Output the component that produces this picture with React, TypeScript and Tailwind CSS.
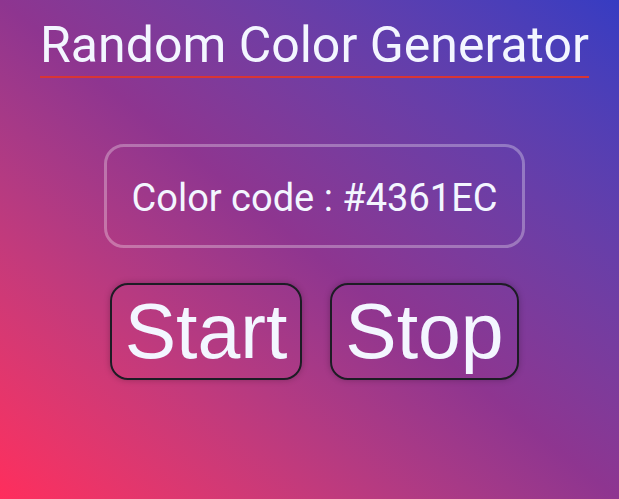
export default function App() {
  return (
    <div className="min-h-[499px] w-full bg-gradient-to-tr from-[#ff2d5c] via-[#8e3590] to-[#363cc2] flex flex-col items-center pl-[10px] text-[#f3f6ff]">
      <h1 className="mt-[15px] pb-[1px] border-b-2 border-[#d93535] font-['Roboto',sans-serif] text-[50px] leading-[60px] font-normal">
        Random Color Generator
      </h1>
      <div className="mt-[66px] w-[421px] h-[104px] pt-[4px] rounded-[20px] border-[3px] border-white/30 flex items-center justify-center font-['Roboto',sans-serif] text-[38px]">
        Color code : #4361EC
      </div>
      <div className="mt-[35px] flex gap-[28px] font-['Liberation_Sans',Arial,sans-serif]">
        <button className="w-[192px] h-[97px] rounded-[18px] border-2 border-[#1c1c24] text-[77px] leading-none shadow-[0_0_6px_rgba(0,0,0,0.25)]">
          Start
        </button>
        <button className="w-[189px] h-[97px] rounded-[18px] border-2 border-[#1c1c24] text-[77px] leading-none shadow-[0_0_6px_rgba(0,0,0,0.25)]">
          Stop
        </button>
      </div>
    </div>
  );
}
